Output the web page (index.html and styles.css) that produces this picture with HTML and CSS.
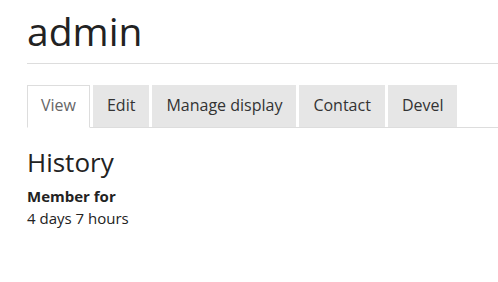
FILE: index.html
```html
<!DOCTYPE html>
<html>
<head>
<meta charset="utf-8">
<link rel="stylesheet" href="styles.css">
</head>
<body>
<div class="page">
  <h1 class="title">admin</h1>
  <ul class="tabs">
    <li class="tab active">View</li>
    <li class="tab">Edit</li>
    <li class="tab">Manage display</li>
    <li class="tab">Contact</li>
    <li class="tab">Devel</li>
  </ul>
  <h2 class="section">History</h2>
  <div class="label">Member for</div>
  <div class="value">4 days 7 hours</div>
</div>
</body>
</html>
```
FILE: styles.css
```css
html, body {
  margin: 0;
  padding: 0;
  background: #fff;
}
body {
  font-family: "Open Sans", sans-serif;
  color: #222;
}
.page {
  padding-left: 27px;
  padding-top: 4px;
}
.title {
  margin: 0;
  font-size: 39px;
  font-weight: 400;
  line-height: 54px;
  padding-bottom: 5px;
  border-bottom: 1px solid #ddd;
}
.tabs {
  list-style: none;
  margin: 21px 0 0 0;
  padding: 0;
  display: flex;
  gap: 3px;
  border-bottom: 1px solid #ddd;
}
.tab {
  height: 42px;
  box-sizing: border-box;
  padding: 0 14px;
  background: #e6e6e6;
  font-size: 16px;
  line-height: 40px;
  color: #333;
}
.tab.active {
  background: #fff;
  border: 1px solid #ddd;
  border-bottom: 1px solid #fff;
  height: 43px;
  margin-bottom: -1px;
  color: #666;
  line-height: 39px;
  padding: 0 13px;
}
.section {
  margin: 18px 0 0 0;
  font-size: 26px;
  font-weight: 400;
  line-height: 32px;
}
.label {
  margin-top: 7px;
  font-weight: 700;
  font-size: 15px;
  line-height: 22px;
}
.value {
  font-size: 15px;
  line-height: 22px;
}
```
